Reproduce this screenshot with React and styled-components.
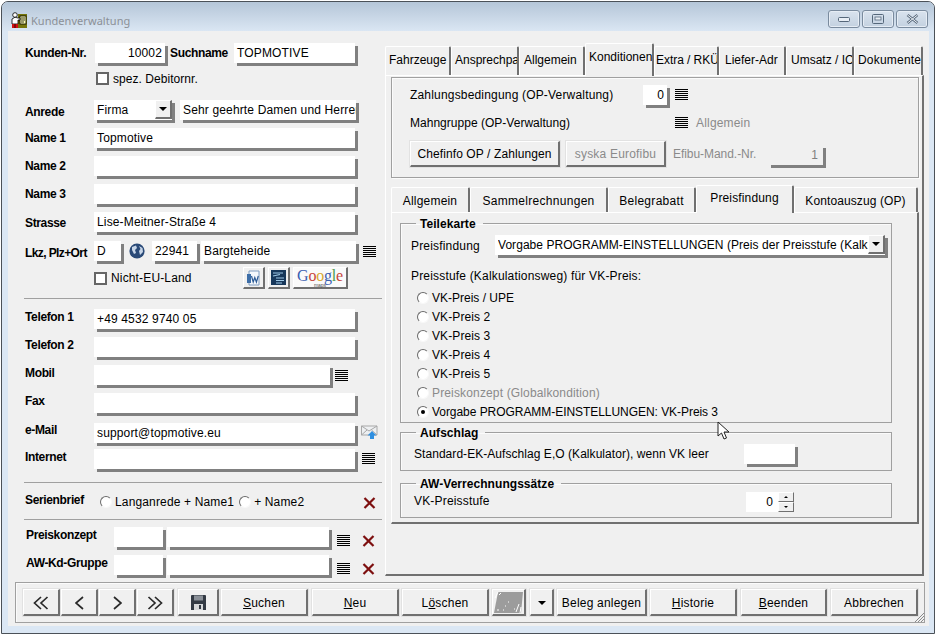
import React from "react";
import styled, { createGlobalStyle } from "styled-components";

const Global = createGlobalStyle`
  html, body { margin: 0; padding: 0; background: #fff; }
  body { font-family: "Liberation Sans", Arial, sans-serif; font-size: 12px; color: #000; }
`;

const Window = styled.div`
  position: relative;
  box-sizing: border-box;
  width: 934px;
  height: 633px;
  margin: 1px 0 0 1px;
  border: 1px solid #4b5158;
  border-radius: 7px 7px 0 0;
  background: #dbe7f4;
  display: flex;
  flex-direction: column;
  overflow: hidden;
`;
const TitleBar = styled.div`
  box-sizing: border-box;
  height: 29px;
  flex: none;
  display: flex;
  align-items: center;
  padding: 7px 6px 0 9px;
  background: linear-gradient(#b5c6d8, #dae6f3);
`;
const TitleText = styled.span`
  margin-left: 4px;
  font-family: "Noto Sans", sans-serif;
  font-size: 11px;
  letter-spacing: 0.05px;
  color: #8b9097;
  flex: 1;
`;
const WinButtons = styled.div`
  display: flex;
  gap: 2px;
  margin-top: -2px;
`;
const WinButton = styled.div`
  box-sizing: border-box;
  width: 32px;
  height: 18px;
  border: 1px solid #7a8b9e;
  border-radius: 3px;
  background: linear-gradient(#d9e3ee, #c3d1e0);
  display: flex;
  align-items: center;
  justify-content: center;
  box-shadow: inset 0 0 0 1px #e6edf5;
`;
const Client = styled.div`
  flex: 1;
  margin: 0 5px 7px 6px;
  background: #f0f0f0;
  display: flex;
  flex-direction: column;
`;
const Main = styled.div`
  height: 551px;
  flex: none;
  display: flex;
`;
const LeftCol = styled.div`
  box-sizing: border-box;
  width: 377px;
  flex: none;
  padding-left: 16px;
`;
const RightCol = styled.div`
  width: 540px;
  flex: none;
  padding-top: 12px;
`;
const Row = styled.div`
  display: flex;
  align-items: flex-start;
  margin-top: ${p => p.$mt || 0}px;
  padding-left: ${p => p.$pl || 0}px;
`;
const Label = styled.div`
  box-sizing: border-box;
  flex: none;
  width: ${p => p.$w || 70}px;
  margin-left: ${p => p.$ml || 0}px;
  padding-top: ${p => p.$pt || 0}px;
  padding-left: ${p => p.$pl ?? 1}px;
  font-weight: bold;
  line-height: 14px;
  letter-spacing: ${p => p.$ls ?? -0.35}px;
  white-space: nowrap;
`;
const Field = styled.div`
  box-sizing: border-box;
  flex: none;
  width: ${p => p.$w}px;
  height: 20px;
  margin-left: ${p => p.$ml || 0}px;
  padding: 0 3px;
  line-height: 20px;
  background: #fff;
  box-shadow: 3px 3px 0 #808080;
  text-align: ${p => p.$right ? "right" : "left"};
  white-space: nowrap;
  overflow: hidden;
  letter-spacing: ${p => p.$ls ?? 0.15}px;
`;
const SelectField = styled(Field)`
  display: flex;
  padding-right: 0;
  overflow: visible;
  justify-content: space-between;
`;
const SelectText = styled.span`
  overflow: hidden;
  flex: 1;
`;
const SelectButton = styled.div`
  box-sizing: border-box;
  flex: none;
  width: 17px;
  height: 19px;
  background: #f0f0f0;
  border-style: solid;
  border-color: #fff #707070 #707070 #fff;
  border-width: 1px 2px 2px 1px;
  display: flex;
  align-items: center;
  justify-content: center;
`;
const Arrow = styled.span`
  width: 0;
  height: 0;
  border-style: solid;
  border-width: 4px 4px 0;
  border-color: #000 transparent transparent;
`;
const IconSlot = styled.div`
  flex: none;
  display: flex;
  margin-left: ${p => p.$ml || 0}px;
  margin-top: ${p => p.$mt || 0}px;
`;
const CheckRow = styled.div`
  display: flex;
  align-items: center;
  gap: 4px;
  flex: none;
  width: ${p => p.$w ? `${p.$w}px` : "auto"};
  height: ${p => p.$h || 13}px;
  letter-spacing: ${p => p.$ls ?? 0.15}px;
`;
const Check = styled.span`
  box-sizing: border-box;
  width: 13px;
  height: 13px;
  flex: none;
  background: #fff;
  border: 2px solid #666;
`;
const Divider = styled.div`
  width: 358px;
  height: 1px;
  background: #a0a0a0;
  margin-top: ${p => p.$mt}px;
`;
const RadioLine = styled.label`
  display: flex;
  align-items: center;
  gap: ${p => p.$gap ?? 3}px;
  height: ${p => p.$h || 19}px;
  margin-left: ${p => p.$ml || 0}px;
  color: ${p => p.$off ? "#8a8a8a" : "#000"};
  letter-spacing: ${p => p.$ls ?? 0.15}px;
  white-space: nowrap;
`;
const RadioDot = styled.span`
  box-sizing: border-box;
  flex: none;
  width: 12px;
  height: 12px;
  border-radius: 50%;
  background: #fff;
  border: 1px solid;
  border-color: #6a6a6a #f8f8f8 #f8f8f8 #6a6a6a;
  display: flex;
  align-items: center;
  justify-content: center;
  &::after {
    content: "";
    width: 4px;
    height: 4px;
    border-radius: 50%;
    background: ${p => p.$on ? "#000" : "transparent"};
  }
`;
const IconBtn = styled.div`
  box-sizing: border-box;
  flex: none;
  width: ${p => p.$w || 22}px;
  height: 22px;
  margin-left: ${p => p.$ml || 0}px;
  background: ${p => p.$bg || "#f0f0f0"};
  border-style: solid;
  border-color: #fff #707070 #707070 #fff;
  border-width: 1px 2px 2px 1px;
  display: flex;
  flex-direction: column;
  align-items: center;
  justify-content: center;
`;
const GoogleWord = styled.span`
  font-family: "Liberation Serif", serif;
  font-size: 16px;
  line-height: 14px;
  letter-spacing: -0.2px;
`;
const GoogleSub = styled.span`
  font-size: 5px;
  line-height: 4px;
  color: #555;
`;
const GL = styled.span`
  color: ${p => p.$c};
`;

const TabStrip = styled.div`
  display: flex;
  align-items: flex-end;
  height: ${p => p.$h}px;
  margin-top: ${p => p.$mt || 0}px;
`;
const Tab = styled.div`
  box-sizing: border-box;
  flex: none;
  width: ${p => p.$w}px;
  height: ${p => p.$active ? p.$ah : p.$ih}px;
  margin-bottom: ${p => p.$active ? -1 : 0}px;
  padding: ${p => p.$active ? p.$ap : 4}px 0 0 ${p => p.$pl || 0}px;
  background: #f0f0f0;
  position: ${p => p.$active ? "relative" : "static"};
  border-top: 1px solid #fff;
  border-left: 1px solid #fff;
  border-right: 2px solid #707070;
  border-radius: 2px 2px 0 0;
  line-height: 18px;
  letter-spacing: ${p => p.$ls ?? 0.15}px;
  white-space: nowrap;
  overflow: hidden;
  text-align: ${p => p.$pl ? "left" : "center"};
`;
const OuterPanel = styled.div`
  box-sizing: border-box;
  width: 539px;
  height: 501px;
  padding: 1px 0 0 5px;
  border-style: solid;
  border-color: #fff #707070 #707070 #fff;
  border-width: 1px 2px 2px 1px;
`;
const Group = styled.div`
  box-sizing: border-box;
  width: 528px;
  height: 101px;
  padding: 7px 0 0 18px;
  border: 1px solid #a0a0a0;
  box-shadow: inset 1px 1px 0 #fbfbfb, 1px 1px 0 #fbfbfb;
`;
const PlainText = styled.div`
  flex: none;
  width: ${p => p.$w ? `${p.$w}px` : "auto"};
  margin-left: ${p => p.$ml || 0}px;
  padding-left: ${p => p.$pl || 0}px;
  line-height: ${p => p.$lh || 20}px;
  color: ${p => p.$off ? "#8a8a8a" : "#000"};
  letter-spacing: ${p => p.$ls ?? 0.18}px;
  white-space: nowrap;
`;
const FlatField = styled(Field)`
  background: #f0f0f0;
  color: #808080;
  margin-top: 4px;
  padding-right: 5px;
`;
const Button = styled.div`
  box-sizing: border-box;
  flex: none;
  width: ${p => p.$w}px;
  height: ${p => p.$h || 27}px;
  margin-left: ${p => p.$ml || 0}px;
  padding-top: 1px;
  background: #f0f0f0;
  color: ${p => p.$off ? "#8a8a8a" : "#000"};
  border-style: solid;
  border-color: #fff #707070 #707070 #fff;
  border-width: 1px 2px 2px 1px;
  box-shadow: 0 0 0 1px #e2e2e2;
  display: flex;
  align-items: center;
  justify-content: center;
  letter-spacing: ${p => p.$ls ?? 0.2}px;
  white-space: nowrap;
`;
const InnerPanel = styled.div`
  box-sizing: border-box;
  width: 528px;
  height: 312px;
  padding: 3px 0 0 8px;
  border-style: solid;
  border-color: #fff #707070 #707070 #fff;
  border-width: 1px 2px 2px 1px;
`;
const Fieldset = styled.fieldset`
  box-sizing: border-box;
  display: block;
  width: 492px;
  height: ${p => p.$h}px;
  margin: ${p => p.$mt || 0}px 0 0;
  padding: 0;
  min-width: 0;
  border: 1px solid #a0a0a0;
  box-shadow: inset 1px 1px 0 #fbfbfb;
`;
const Legend = styled.legend`
  margin-left: 15px;
  padding: 1px 7px 0 4px;
  font-weight: bold;
  line-height: 14px;
  letter-spacing: 0.05px;
`;
const RadioList = styled.div`
  margin: 5px 0 0 16px;
`;
const Spinner = styled.div`
  display: flex;
  flex: none;
`;
const SpinValue = styled.div`
  box-sizing: border-box;
  width: 32px;
  height: 20px;
  padding-right: 5px;
  background: #fff;
  text-align: right;
  line-height: 20px;
`;
const SpinButtons = styled.div`
  display: flex;
  flex-direction: column;
  width: 16px;
`;
const SpinBtn = styled.div`
  box-sizing: border-box;
  height: 10px;
  background: #f0f0f0;
  border-style: solid;
  border-color: #fff #707070 #707070 #fff;
  border-width: 1px;
  display: flex;
  align-items: center;
  justify-content: center;
`;
const Tiny = styled.span`
  width: 0;
  height: 0;
  border-style: solid;
  border-width: ${p => p.$up ? "0 2px 2px" : "2px 2px 0"};
  border-color: ${p => p.$up ? "transparent transparent #000" : "#000 transparent transparent"};
`;
const Toolbar = styled.div`
  box-sizing: border-box;
  position: relative;
  width: 910px;
  height: 41px;
  margin-left: 7px;
  padding-left: 7px;
  border: 1px solid #a0a0a0;
  box-shadow: inset 1px 1px 0 #fbfbfb;
  display: flex;
  align-items: center;
`;
const Grip = styled.svg`
  position: absolute;
  right: 0;
  bottom: 0;
`;
const Cursor = styled.svg`
  position: absolute;
  left: 715px;
  top: 419px;
`;
const U = styled.span`
  text-decoration: underline;
`;

const ListIcon = () => (
  <svg width="13" height="12" viewBox="0 0 13 12">
    {[0.5, 2.5, 4.5, 6.5, 8.5, 10.5].map(y => (
      <line key={y} x1="0" x2="13" y1={y} y2={y} stroke="#000" strokeWidth="1" />
    ))}
  </svg>
);
const RedX = () => (
  <svg width="13" height="12" viewBox="0 0 13 12">
    <path d="M1.5 1 L11.5 11 M11.5 1 L1.5 11" stroke="#7d0f0f" strokeWidth="2.2" fill="none" />
  </svg>
);
const Globe = () => (
  <svg width="16" height="16" viewBox="0 0 16 16">
    <circle cx="8" cy="8" r="7.6" fill="#2a4a78" />
    <path d="M3 4 L7 2.5 L8 5 L6 7 L7 10 L5 11 L3 7Z M10 3 L13.5 5 L14 9 L11 12 L10 8 L11.5 6Z" fill="#c8d6e8" />
  </svg>
);
const MailIcon = () => (
  <svg width="17" height="15" viewBox="0 0 17 15">
    <path d="M0.5 1 H16 V10 H0.5Z" fill="#eef0f2" stroke="#a8a8a8" />
    <path d="M0.5 1 L8 6 L16 1 M0.5 10 L6 5 M16 10 L10.5 5" fill="none" stroke="#a8a8a8" />
    <path d="M11 6 L15.5 10.5 H13 V14 H9 V10.5 H6.5Z" fill="#2f8fe0" />
  </svg>
);
const AppIcon = () => (
  <svg width="16" height="16" viewBox="0 0 16 16">
    <rect x="7" y="2" width="9" height="14" fill="#75750a" />
    <rect x="9" y="4" width="6" height="8" fill="#ffffb0" stroke="#000" strokeWidth="0.8" />
    <path d="M10 6h4M10 8h4M10 10h3" stroke="#000" strokeWidth="0.8" />
    <circle cx="4" cy="3" r="2.3" fill="#fff" stroke="#000" strokeWidth="0.8" />
    <path d="M1 7 Q4 4 7 6 L9 6 L9 8 L7 8 L7 12 L1 12Z" fill="#fff" stroke="#000" strokeWidth="0.8" />
    <rect x="1" y="12" width="6" height="4" fill="#d01010" />
    <rect x="3.6" y="12" width="0.8" height="4" fill="#000" />
  </svg>
);
const WordIcon = () => (
  <svg width="16" height="16" viewBox="0 0 16 16">
    <path d="M3 1 H13 V15 H3Z" fill="#f4f8fc" stroke="#7f9cc0" />
    <path d="M1 4 H5 V13 H1Z" fill="#3d6ea8" />
    <path d="M5.5 6 L7.2 12 L8.8 7.5 L10.4 12 L12.3 6" fill="none" stroke="#2b5a96" strokeWidth="1.2" />
  </svg>
);
const DocIcon = () => (
  <svg width="17" height="17" viewBox="0 0 17 17">
    <rect x="1" y="1" width="15" height="15" fill="#17375a" />
    <path d="M3 4 H13 M3 7 L10 5.5 M6 9 H14 M6 11.5 H14 M6 14 H12" stroke="#9ec8e6" strokeWidth="1.2" />
  </svg>
);
const Double = ({ flip }) => (
  <svg width="16" height="14" viewBox="0 0 16 14">
    <g transform={flip ? "translate(16 0) scale(-1 1)" : undefined} fill="none" stroke="#2a2a2a" strokeWidth="1.7">
      <path d="M8 1 L1.5 7 L8 13" />
      <path d="M14.5 1 L8 7 L14.5 13" />
    </g>
  </svg>
);
const Single = ({ flip }) => (
  <svg width="9" height="14" viewBox="0 0 9 14">
    <path d={flip ? "M1 1 L8 7 L1 13" : "M8 1 L1 7 L8 13"} fill="none" stroke="#2a2a2a" strokeWidth="1.7" />
  </svg>
);
const Floppy = () => (
  <svg width="15" height="15" viewBox="0 0 15 15">
    <path d="M0 1 Q0 0 1 0 H14 Q15 0 15 1 V15 H0Z" fill="#333a44" />
    <rect x="3" y="0.5" width="9" height="5" fill="#8a9098" />
    <rect x="3" y="9" width="9" height="6" fill="#d6d8da" />
    <rect x="8" y="10" width="2" height="4" fill="#333a44" />
  </svg>
);
const Specks = () => (
  <svg width="29" height="21" viewBox="0 0 29 21">
    <path d="M4 0 H29 L27 21 H0Z" fill="#9c9c9c" />
    <path d="M4 0 L1 6 M7 1 L5 3 M25 12 L22 20 M27 15 L26 21 M11 14 h1 M14 10 h1 M9 18 h1 M20 17 h1 M3 18 h2" stroke="#fff" strokeWidth="1" />
  </svg>
);

const outer = [
  ["Fahrzeuge", 66, 3, 0], ["Ansprechpartner", 68, 3, 0], ["Allgemein", 66, 4, 0], ["Konditionen", 69, 3, 0],
  ["Extra / RKÜ", 65, 1, -0.05], ["Liefer-Adr", 67, 5, 0], ["Umsatz / IC", 68, 4, 0], ["Dokumente", 69, 3, 0.2],
];
const inner = [
  ["Allgemein", 79, 0.2], ["Sammelrechnungen", 138, 0.3], ["Belegrabatt", 88, 0.3], ["Preisfindung", 98, 0.15], ["Kontoauszug (OP)", 124, 0.1],
];
const radios = [["VK-Preis / UPE", 0], ["VK-Preis 2", 0.1], ["VK-Preis 3", 0.1], ["VK-Preis 4", 0.1], ["VK-Preis 5", 0.1]];

export default function App() {
  return (
    <>
      <Global />
      <Window>
        <TitleBar>
          <AppIcon />
          <TitleText>Kundenverwaltung</TitleText>
          <WinButtons>
            <WinButton>
              <svg width="12" height="5" viewBox="0 0 12 5"><rect x="0.5" y="0.5" width="11" height="4" rx="1" fill="#e8eef5" stroke="#55677a" /></svg>
            </WinButton>
            <WinButton>
              <svg width="12" height="10" viewBox="0 0 12 10"><rect x="0.5" y="0.5" width="11" height="9" rx="1" fill="none" stroke="#55677a" /><rect x="3" y="3" width="6" height="3" fill="#e8eef5" stroke="#55677a" strokeWidth="0.8" /></svg>
            </WinButton>
            <WinButton>
              <svg width="13" height="10" viewBox="0 0 13 10"><path d="M1.5 1 L11.5 9 M11.5 1 L1.5 9" stroke="#5b6c7e" strokeWidth="2.6" /><path d="M1.5 1 L11.5 9 M11.5 1 L1.5 9" stroke="#eef2f7" strokeWidth="1" /></svg>
            </WinButton>
          </WinButtons>
        </TitleBar>
        <Client>
          <Main>
            <LeftCol>
              <Row $mt={12}>
                <Label $w={71} $pt={3}>Kunden-Nr.</Label>
                <Field $w={70} $right>10002</Field>
                <Label $w={64} $ml={5} $pt={3} $pl={0}>Suchname</Label>
                <Field $w={121}>TOPMOTIVE</Field>
              </Row>
              <Row $mt={9} $pl={72}>
                <CheckRow $ls={0.05}><Check />spez. Debitornr.</CheckRow>
              </Row>
              <Row $mt={15}>
                <Label $pt={5}>Anrede</Label>
                <SelectField $w={78}><SelectText>Firma</SelectText><SelectButton><Arrow /></SelectButton></SelectField>
                <Field $w={176} $ml={8}>Sehr geehrte Damen und Herren</Field>
              </Row>
              {[["Name 1", "Topmotive", 3], ["Name 2", "", 3], ["Name 3", "", 3], ["Strasse", "Lise-Meitner-Straße 4", 4]].map(([l, v, pt]) => (
                <Row $mt={8} key={l}>
                  <Label $pt={pt}>{l}</Label>
                  <Field $w={261}>{v}</Field>
                </Row>
              ))}
              <Row $mt={9}>
                <Label $pt={5} $ls={-0.6}>Lkz, Plz+Ort</Label>
                <Field $w={27}>D</Field>
                <IconSlot $ml={8} $mt={2}><Globe /></IconSlot>
                <Field $w={45} $ml={7}>22941</Field>
                <Field $w={155} $ml={4}>Bargteheide</Field>
                <IconSlot $ml={7} $mt={5}><ListIcon /></IconSlot>
              </Row>
              <Row $mt={6} $pl={70}>
                <CheckRow $w={149} $h={22}><Check />Nicht-EU-Land</CheckRow>
                <IconBtn><WordIcon /></IconBtn>
                <IconBtn $ml={3}><DocIcon /></IconBtn>
                <IconBtn $ml={3} $w={55} $bg="#fafafa">
                  <GoogleWord>
                    <GL $c="#3a5fb0">G</GL><GL $c="#c8453a">o</GL><GL $c="#d8a92f">o</GL><GL $c="#3a5fb0">g</GL><GL $c="#4c9a4c">l</GL><GL $c="#c8453a">e</GL>
                  </GoogleWord>
                  <GoogleSub>maps</GoogleSub>
                </IconBtn>
              </Row>
              <Divider $mt={9} />
              <Row $mt={10}>
                <Label $pt={1}>Telefon 1</Label>
                <Field $w={261}>+49 4532 9740 05</Field>
              </Row>
              <Row $mt={8}>
                <Label $pt={1}>Telefon 2</Label>
                <Field $w={261} />
              </Row>
              <Row $mt={8}>
                <Label $pt={1}>Mobil</Label>
                <Field $w={236} />
                <IconSlot $ml={5} $mt={5}><ListIcon /></IconSlot>
              </Row>
              <Row $mt={8}>
                <Label $pt={1}>Fax</Label>
                <Field $w={261} />
              </Row>
              <Row $mt={10}>
                <Label>e-Mail</Label>
                <Field $w={261}>support@topmotive.eu</Field>
                <IconSlot $ml={6} $mt={2}><MailIcon /></IconSlot>
              </Row>
              <Row $mt={6}>
                <Label $pt={1}>Internet</Label>
                <Field $w={261} />
                <IconSlot $ml={7} $mt={4}><ListIcon /></IconSlot>
              </Row>
              <Divider $mt={13} />
              <Row $mt={9}>
                <Label $w={76} $pt={1}>Serienbrief</Label>
                <RadioLine $h={20}><RadioDot />Langanrede + Name1</RadioLine>
                <RadioLine $h={20} $ml={5}><RadioDot />+ Name2</RadioLine>
                <IconSlot $ml={59} $mt={5}><RedX /></IconSlot>
              </Row>
              <Divider $mt={7} />
              <Row $mt={7}>
                <Label $w={90} $pl={2} $pt={1}>Preiskonzept</Label>
                <Field $w={49} />
                <Field $w={162} $ml={4} />
                <IconSlot $ml={8} $mt={8}><ListIcon /></IconSlot>
                <IconSlot $ml={12} $mt={8}><RedX /></IconSlot>
              </Row>
              <Row $mt={8}>
                <Label $w={90} $pl={2} $pt={1}>AW-Kd-Gruppe</Label>
                <Field $w={49} />
                <Field $w={162} $ml={4} />
                <IconSlot $ml={8} $mt={8}><ListIcon /></IconSlot>
                <IconSlot $ml={12} $mt={8}><RedX /></IconSlot>
              </Row>
            </LeftCol>
            <RightCol>
              <TabStrip $h={32}>
                {outer.map(([t, w, pl, ls], i) => (
                  <Tab key={t} $w={w} $pl={pl} $ih={29} $ah={33} $ap={4} $active={i === 3} $ls={ls}>{t}</Tab>
                ))}
              </TabStrip>
              <OuterPanel>
                <Group>
                  <Row>
                    <PlainText $w={233}>Zahlungsbedingung (OP-Verwaltung)</PlainText>
                    <Field $w={24} $right>0</Field>
                    <IconSlot $ml={8} $mt={4}><ListIcon /></IconSlot>
                  </Row>
                  <Row $mt={8}>
                    <PlainText $w={265} $ls={0.02}>Mahngruppe (OP-Verwaltung)</PlainText>
                    <IconSlot $mt={4}><ListIcon /></IconSlot>
                    <PlainText $ml={8} $off>Allgemein</PlainText>
                  </Row>
                  <Row $mt={8}>
                    <Button $w={150} $h={26} $ls={0.1}>Chefinfo OP / Zahlungen</Button>
                    <Button $w={100} $h={26} $ml={6} $off>syska Eurofibu</Button>
                    <PlainText $w={95} $ml={7} $lh={27} $off $ls={-0.05}>Efibu-Mand.-Nr.</PlainText>
                    <FlatField $w={55} $right>1</FlatField>
                  </Row>
                </Group>
                <TabStrip $h={27} $mt={7}>
                  {inner.map(([t, w, ls], i) => (
                    <Tab key={t} $w={w} $ih={25} $ah={28} $ap={3} $active={i === 3} $ls={ls}>{t}</Tab>
                  ))}
                </TabStrip>
                <InnerPanel>
                  <Fieldset $h={207}>
                    <Legend>Teilekarte</Legend>
                    <Row $mt={4} $pl={10}>
                      <PlainText $w={84} $lh={23}>Preisfindung</PlainText>
                      <SelectField $w={390} $ls={0.05}>
                        <SelectText>Vorgabe PROGRAMM-EINSTELLUNGEN (Preis der Preisstufe (Kalkulation)</SelectText>
                        <SelectButton><Arrow /></SelectButton>
                      </SelectField>
                    </Row>
                    <PlainText $pl={10} $lh={11}>&nbsp;</PlainText>
                    <PlainText $pl={10} $lh={14}>Preisstufe (Kalkulationsweg) für VK-Preis:</PlainText>
                    <RadioList>
                      {radios.map(([r, ls]) => <RadioLine key={r} $ls={ls}><RadioDot />{r}</RadioLine>)}
                      <RadioLine $off><RadioDot />Preiskonzept (Globalkondition)</RadioLine>
                      <RadioLine $ls={-0.05}><RadioDot $on />Vorgabe PROGRAMM-EINSTELLUNGEN: VK-Preis 3</RadioLine>
                    </RadioList>
                  </Fieldset>
                  <Fieldset $h={46} $mt={2}>
                    <Legend>Aufschlag</Legend>
                    <Row $mt={4} $pl={13}>
                      <PlainText $w={330} $lh={21} $ls={0.05}>Standard-EK-Aufschlag E,O (Kalkulator), wenn VK leer</PlainText>
                      <Field $w={51} />
                    </Row>
                  </Fieldset>
                  <Fieldset $h={42} $mt={5}>
                    <Legend>AW-Verrechnungssätze</Legend>
                    <Row $mt={1} $pl={13}>
                      <PlainText $w={332} $lh={18}>VK-Preisstufe</PlainText>
                      <Spinner>
                        <SpinValue>0</SpinValue>
                        <SpinButtons>
                          <SpinBtn><Tiny $up /></SpinBtn>
                          <SpinBtn><Tiny /></SpinBtn>
                        </SpinButtons>
                      </Spinner>
                    </Row>
                  </Fieldset>
                </InnerPanel>
              </OuterPanel>
            </RightCol>
          </Main>
          <Toolbar>
            <Button $w={37}><Double /></Button>
            <Button $w={37} $ml={1}><Single /></Button>
            <Button $w={37} $ml={1}><Single flip /></Button>
            <Button $w={37} $ml={1}><Double flip /></Button>
            <Button $w={41} $ml={4}><Floppy /></Button>
            <Button $w={87} $ml={2}><span><U>S</U>uchen</span></Button>
            <Button $w={87} $ml={4}><span><U>N</U>eu</span></Button>
            <Button $w={87} $ml={3}><span>L<U>ö</U>schen</span></Button>
            <Button $w={34} $ml={3}><Specks /></Button>
            <Button $w={24} $ml={4}><Arrow /></Button>
            <Button $w={90} $ml={3}>Beleg anlegen</Button>
            <Button $w={87} $ml={3}><span><U>H</U>istorie</span></Button>
            <Button $w={86} $ml={4}><span><U>B</U>eenden</span></Button>
            <Button $w={87} $ml={4}>Abbrechen</Button>
            <Grip width="9" height="9" viewBox="0 0 9 9">
              <path d="M0 9 L9 0 M3 9 L9 3 M6 9 L9 6" stroke="#8a8a8a" strokeWidth="1" />
            </Grip>
          </Toolbar>
        </Client>
        <Cursor width="14" height="20" viewBox="0 0 14 20">
          <path d="M1 1 V15 L4.5 12 L7 18 L9.5 17 L7 11 H12Z" fill="#fff" stroke="#222" strokeWidth="1" />
        </Cursor>
      </Window>
    </>
  );
}
